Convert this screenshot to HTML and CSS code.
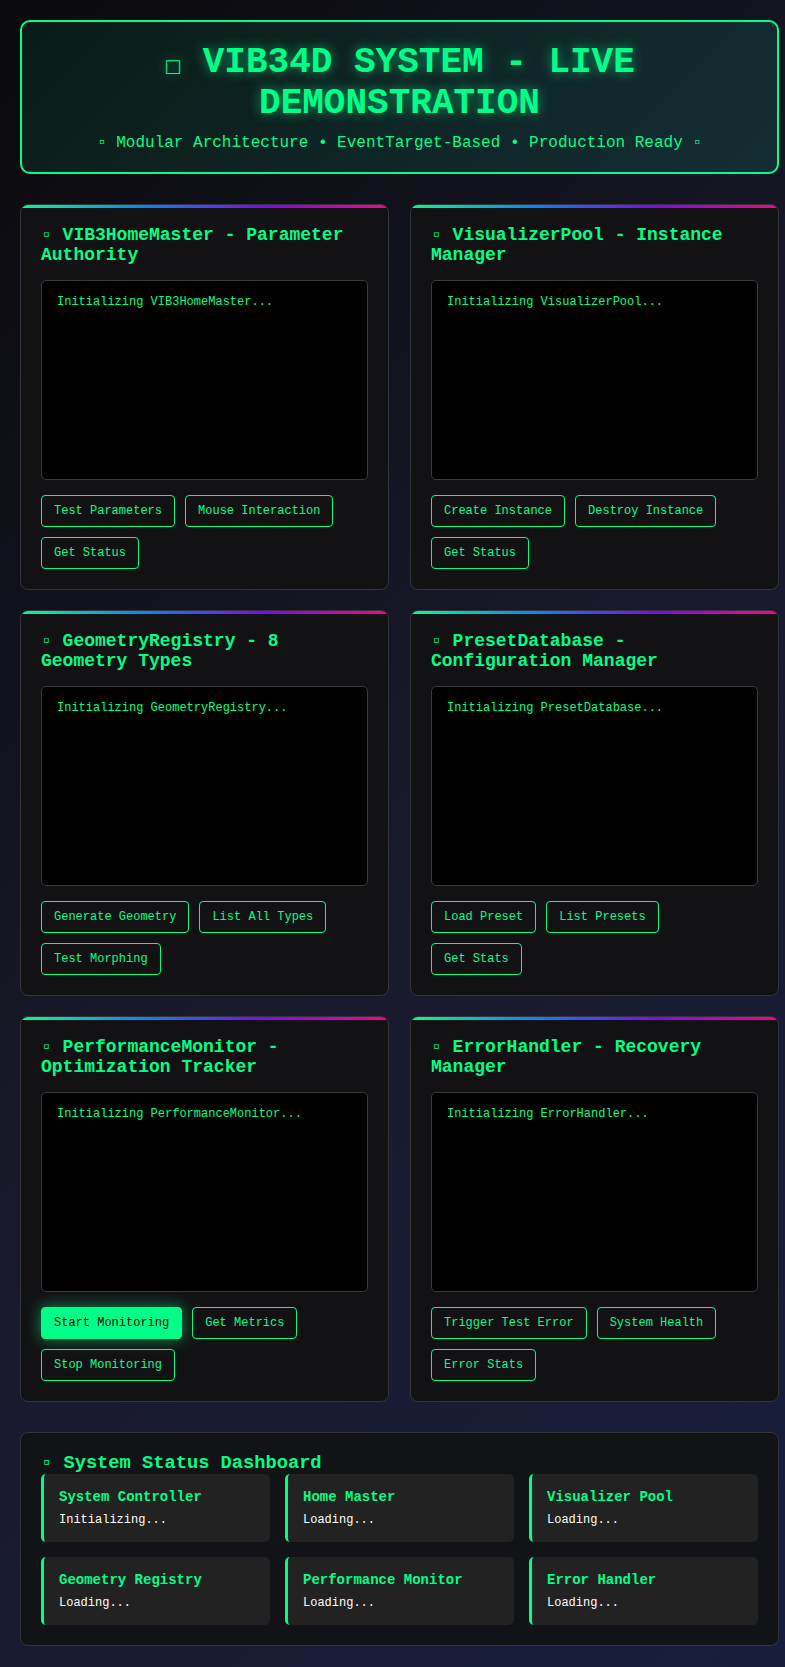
FILE: index.html
```html
<!DOCTYPE html>
<html lang="en">
<head>
<meta charset="utf-8">
<title>VIB34D System - Live Demonstration</title>
<link rel="stylesheet" href="styles.css">
</head>
<body>
<div class="page">
  <header class="hero">
    <h1 class="hero-title"><span class="glyph">□</span> VIB34D SYSTEM - LIVE DEMONSTRATION</h1>
    <p class="hero-sub">▫ Modular Architecture • EventTarget-Based • Production Ready ▫</p>
  </header>

  <main class="grid">
    <section class="card">
      <h3 class="card-title">▫ VIB3HomeMaster - Parameter Authority</h3>
      <div class="log">Initializing VIB3HomeMaster...</div>
      <div class="actions">
        <button class="btn">Test Parameters</button>
        <button class="btn">Mouse Interaction</button>
        <button class="btn">Get Status</button>
      </div>
    </section>

    <section class="card">
      <h3 class="card-title">▫ VisualizerPool - Instance Manager</h3>
      <div class="log">Initializing VisualizerPool...</div>
      <div class="actions">
        <button class="btn">Create Instance</button>
        <button class="btn">Destroy Instance</button>
        <button class="btn">Get Status</button>
      </div>
    </section>

    <section class="card">
      <h3 class="card-title">▫ GeometryRegistry - 8 Geometry Types</h3>
      <div class="log">Initializing GeometryRegistry...</div>
      <div class="actions">
        <button class="btn">Generate Geometry</button>
        <button class="btn">List All Types</button>
        <button class="btn">Test Morphing</button>
      </div>
    </section>

    <section class="card">
      <h3 class="card-title">▫ PresetDatabase - Configuration Manager</h3>
      <div class="log">Initializing PresetDatabase...</div>
      <div class="actions">
        <button class="btn">Load Preset</button>
        <button class="btn">List Presets</button>
        <button class="btn">Get Stats</button>
      </div>
    </section>

    <section class="card">
      <h3 class="card-title">▫ PerformanceMonitor - Optimization Tracker</h3>
      <div class="log">Initializing PerformanceMonitor...</div>
      <div class="actions">
        <button class="btn btn-active">Start Monitoring</button>
        <button class="btn">Get Metrics</button>
        <button class="btn">Stop Monitoring</button>
      </div>
    </section>

    <section class="card">
      <h3 class="card-title">▫ ErrorHandler - Recovery Manager</h3>
      <div class="log">Initializing ErrorHandler...</div>
      <div class="actions">
        <button class="btn">Trigger Test Error</button>
        <button class="btn">System Health</button>
        <button class="btn">Error Stats</button>
      </div>
    </section>
  </main>

  <section class="dashboard">
    <h3 class="dash-title">▫ System Status Dashboard</h3>
    <div class="status-grid">
      <div class="status-item"><div class="status-name">System Controller</div><div class="status-value">Initializing...</div></div>
      <div class="status-item"><div class="status-name">Home Master</div><div class="status-value">Loading...</div></div>
      <div class="status-item"><div class="status-name">Visualizer Pool</div><div class="status-value">Loading...</div></div>
      <div class="status-item"><div class="status-name">Geometry Registry</div><div class="status-value">Loading...</div></div>
      <div class="status-item"><div class="status-name">Performance Monitor</div><div class="status-value">Loading...</div></div>
      <div class="status-item"><div class="status-name">Error Handler</div><div class="status-value">Loading...</div></div>
    </div>
  </section>
</div>
</body>
</html>
```

FILE: styles.css
```css
* {
  box-sizing: border-box;
}

html, body {
  margin: 0;
}

body {
  min-height: 1667px;
  padding: 20px 6px 20px 20px;
  font-family: "Liberation Mono", "Courier New", "DejaVu Sans", monospace;
  color: #00ff88;
  background: linear-gradient(135deg, #0a0a0c 0%, #1a1a2e 55%, #171e3c 100%);
}

.page {
  width: 100%;
}

/* Header */
.hero {
  border: 2px solid #00ff88;
  border-radius: 10px;
  padding: 20px;
  text-align: center;
  background: linear-gradient(135deg, rgba(0, 255, 136, 0.07) 0%, rgba(0, 220, 170, 0.12) 100%);
  margin-bottom: 30px;
}

.hero-title {
  margin: 0 0 10px;
  font-size: 36px;
  font-weight: bold;
  line-height: normal;
  color: #00ff88;
  text-shadow: 0 0 12px rgba(0, 255, 136, 0.6);
}

.glyph {
  font-family: "DejaVu Sans", sans-serif;
  font-size: 18px;
  font-weight: normal;
}

.hero-sub {
  margin: 0;
  font-size: 16px;
  color: #00ff88;
}

/* Cards */
.grid {
  display: grid;
  grid-template-columns: 1fr 1fr;
  gap: 20px 21px;
  margin-bottom: 30px;
}

.card {
  position: relative;
  overflow: hidden;
  background: #121214;
  border: 1px solid #34353a;
  border-radius: 8px;
  padding: 20px;
}

.card::before {
  content: "";
  position: absolute;
  top: 0;
  left: 0;
  right: 0;
  height: 3px;
  background: linear-gradient(90deg, #00ff88, #0088ff, #8800ff, #ff0088);
}

.card-title {
  margin: 0 0 15px;
  font-size: 18px;
  font-weight: bold;
  line-height: normal;
  color: #00ff88;
}

.log {
  height: 200px;
  background: #000;
  border: 1px solid #3a3a3a;
  border-radius: 5px;
  padding: 14px 15px;
  font-size: 12px;
  color: #00ff88;
  margin-bottom: 15px;
}

.actions {
  display: flex;
  flex-wrap: wrap;
  gap: 10px;
}

.btn {
  font-family: "Liberation Mono", "Courier New", monospace;
  font-size: 12px;
  line-height: normal;
  padding: 8px 12px;
  color: #00ff88;
  background: transparent;
  border: 1px solid #00ff88;
  border-radius: 4px;
  cursor: pointer;
}

.btn-active {
  background: #00ff88;
  color: #0a0a0a;
  box-shadow: 0 0 15px rgba(0, 255, 136, 0.55);
}

/* Dashboard */
.dashboard {
  background: #121316;
  border: 1px solid #34353a;
  border-radius: 8px;
  padding: 19px 20px 20px;
}

.dash-title {
  margin: 0;
  font-size: 18.72px;
  font-weight: bold;
  line-height: normal;
  color: #00ff88;
}

.status-grid {
  display: grid;
  grid-template-columns: repeat(3, 1fr);
  gap: 15px;
}

.status-item {
  background: #222;
  border-left: 3px solid #00ff88;
  border-radius: 5px;
  padding: 15px;
}

.status-name {
  font-size: 14px;
  font-weight: bold;
  color: #00ff88;
  margin-bottom: 8px;
}

.status-value {
  font-size: 12px;
  color: #fff;
}
```
